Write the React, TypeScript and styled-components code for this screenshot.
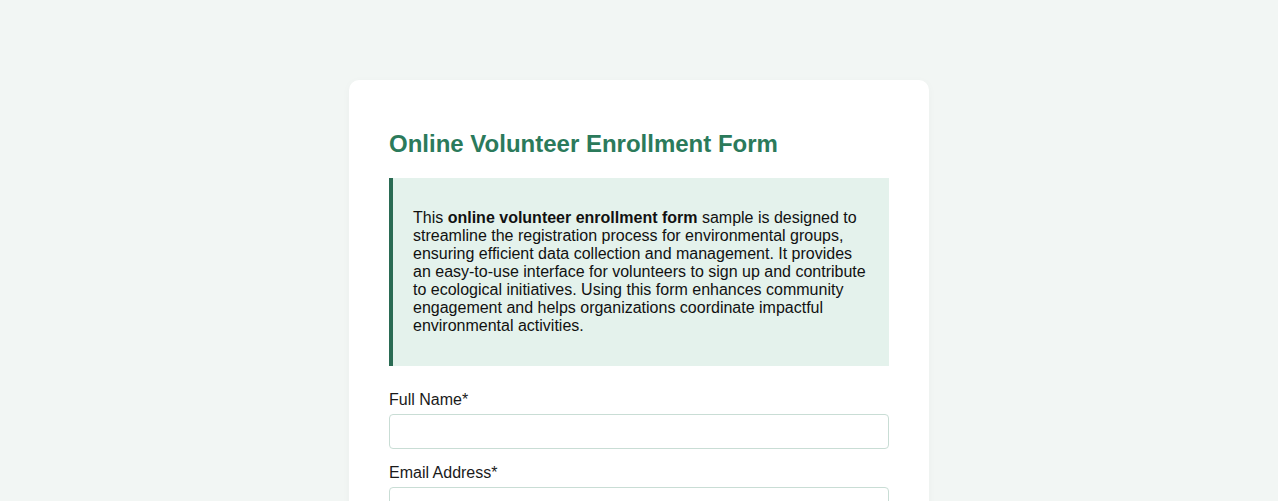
import React from 'react';
import styled, { createGlobalStyle } from 'styled-components';

const GlobalStyle = createGlobalStyle`
  body {
    margin: 0;
    background-color: #f2f6f4;
    font-family: "Liberation Sans", Arial, sans-serif;
    color: #1a1a1a;
  }
`;

const Page = styled.div`
  display: flex;
  justify-content: center;
  padding: 80px 20px 40px;
`;

const Card = styled.div`
  width: 500px;
  padding: 40px;
  background-color: #ffffff;
  border-radius: 10px;
  box-shadow: 0 2px 10px rgba(0, 0, 0, 0.03);
`;

const Title = styled.h1`
  margin: 10px 0 20px;
  font-size: 24px;
  font-weight: 700;
  color: #2b7a5b;
`;

const Intro = styled.div`
  background-color: #e4f2ec;
  border-left: 4px solid #2a6b53;
  padding: 31px 20px 31px;
  margin-bottom: 25px;
  font-size: 16px;
  line-height: normal;
  color: #111;

  p {
    margin: 0;
  }
`;

const Field = styled.div`
  margin-bottom: 15px;
`;

const Label = styled.label`
  display: block;
  margin-bottom: 5px;
  font-size: 16px;
  line-height: normal;
  color: #1a1a1a;
`;

const Input = styled.input`
  display: block;
  box-sizing: border-box;
  width: 100%;
  height: 35px;
  padding: 6px 10px;
  border: 1px solid #c9ddd5;
  border-radius: 4px;
  font-family: inherit;
  font-size: 15px;
  background: #fff;
`;

const App: React.FC = () => {
  return (
    <>
      <GlobalStyle />
      <Page>
        <Card>
          <Title>Online Volunteer Enrollment Form</Title>
          <Intro>
            <p>
              This <strong>online volunteer enrollment form</strong> sample is designed to
              streamline the registration process for environmental groups, ensuring
              efficient data collection and management. It provides an easy-to-use
              interface for volunteers to sign up and contribute to ecological
              initiatives. Using this form enhances community engagement and helps
              organizations coordinate impactful environmental activities.
            </p>
          </Intro>
          <Field>
            <Label htmlFor="fullName">Full Name*</Label>
            <Input id="fullName" type="text" />
          </Field>
          <Field>
            <Label htmlFor="email">Email Address*</Label>
            <Input id="email" type="email" />
          </Field>
          <Field>
            <Label htmlFor="phone">Phone Number</Label>
            <Input id="phone" type="tel" />
          </Field>
        </Card>
      </Page>
    </>
  );
};

export default App;
